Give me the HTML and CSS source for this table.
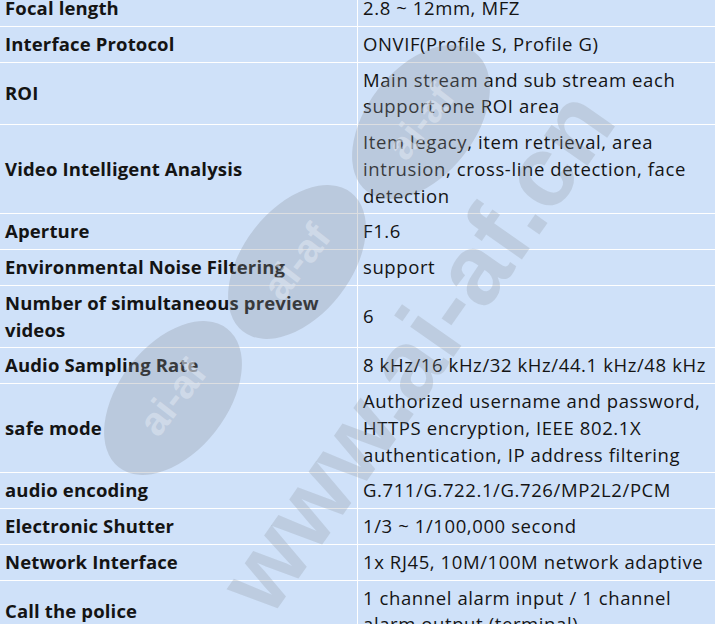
FILE: index.html
```html
<!DOCTYPE html>
<html>
<head>
<meta charset="utf-8">
<link rel="stylesheet" href="styles.css">
</head>
<body>
<div class="page">
  <table class="spec">
    <tbody>
      <tr><td class="k">Focal length</td><td class="v">2.8 ~ 12mm, MFZ</td></tr>
      <tr><td class="k">Interface Protocol</td><td class="v">ONVIF(Profile S, Profile G)</td></tr>
      <tr><td class="k">ROI</td><td class="v">Main stream and sub stream each support one ROI area</td></tr>
      <tr><td class="k">Video Intelligent Analysis</td><td class="v">Item legacy, item retrieval, area intrusion, cross-line detection, face detection</td></tr>
      <tr><td class="k">Aperture</td><td class="v">F1.6</td></tr>
      <tr><td class="k">Environmental Noise Filtering</td><td class="v">support</td></tr>
      <tr><td class="k">Number of simultaneous preview videos</td><td class="v">6</td></tr>
      <tr><td class="k">Audio Sampling Rate</td><td class="v">8 kHz/16 kHz/32 kHz/44.1 kHz/48 kHz</td></tr>
      <tr><td class="k">safe mode</td><td class="v">Authorized username and password, HTTPS encryption, IEEE 802.1X authentication, IP address filtering</td></tr>
      <tr><td class="k">audio encoding</td><td class="v">G.711/G.722.1/G.726/MP2L2/PCM</td></tr>
      <tr><td class="k">Electronic Shutter</td><td class="v">1/3 ~ 1/100,000 second</td></tr>
      <tr><td class="k">Network Interface</td><td class="v">1x RJ45, 10M/100M network adaptive</td></tr>
      <tr><td class="k">Call the police</td><td class="v">1 channel alarm input / 1 channel alarm output (terminal)</td></tr>
    </tbody>
  </table>
  <svg class="wm" width="715" height="624" viewBox="0 0 715 624" aria-hidden="true">
    <g class="seal" transform="translate(421 122) rotate(-52)">
      <ellipse rx="88" ry="54"></ellipse>
      <text class="seal-t" x="0" y="13">ai-af</text>
    </g>
    <g class="seal" transform="translate(297 262) rotate(-52)">
      <ellipse rx="88" ry="54"></ellipse>
      <text class="seal-t" x="0" y="13">ai-af</text>
    </g>
    <g class="seal" transform="translate(173 398) rotate(-52)">
      <ellipse rx="88" ry="54"></ellipse>
      <text class="seal-t" x="0" y="13">ai-af</text>
    </g>
    <text class="site" transform="translate(418 352) rotate(-55)" x="0" y="32">www.ai-af.cn</text>
  </svg>
</div>
</body>
</html>
```

FILE: styles.css
```css
html, body {
  margin: 0;
  padding: 0;
  background: #cfe1f9;
}
body {
  overflow: hidden;
  font-family: "Open Sans", "Noto Sans", sans-serif;
  color: #141414;
}
.page {
  position: relative;
  width: 715px;
  height: 624px;
  overflow: hidden;
}
.spec {
  width: 715px;
  margin-top: -9px;
  border-collapse: collapse;
  table-layout: fixed;
  background: #cfe1f9;
}
.spec td {
  font-size: 18.5px;
  line-height: 26.75px;
  padding: 4px 5px;
  border-bottom: 1px solid #ffffff;
  vertical-align: middle;
}
.spec .k {
  width: 347px;
  font-weight: 700;
  letter-spacing: 0.15px;
}
.spec .v {
  border-left: 1px solid #ffffff;
  padding-left: 5px;
  letter-spacing: 0.6px;
}
.wm {
  position: absolute;
  left: 0;
  top: 0;
  pointer-events: none;
}
.seal ellipse {
  fill: rgba(140, 145, 155, 0.3);
}
.seal-t {
  font-family: "Liberation Sans", sans-serif;
  font-weight: 700;
  font-size: 40px;
  text-anchor: middle;
  fill: rgba(225, 232, 242, 0.55);
}
.site {
  font-family: "Liberation Sans", sans-serif;
  font-weight: 700;
  font-size: 100px;
  text-anchor: middle;
  fill: rgba(140, 145, 155, 0.26);
}
```
